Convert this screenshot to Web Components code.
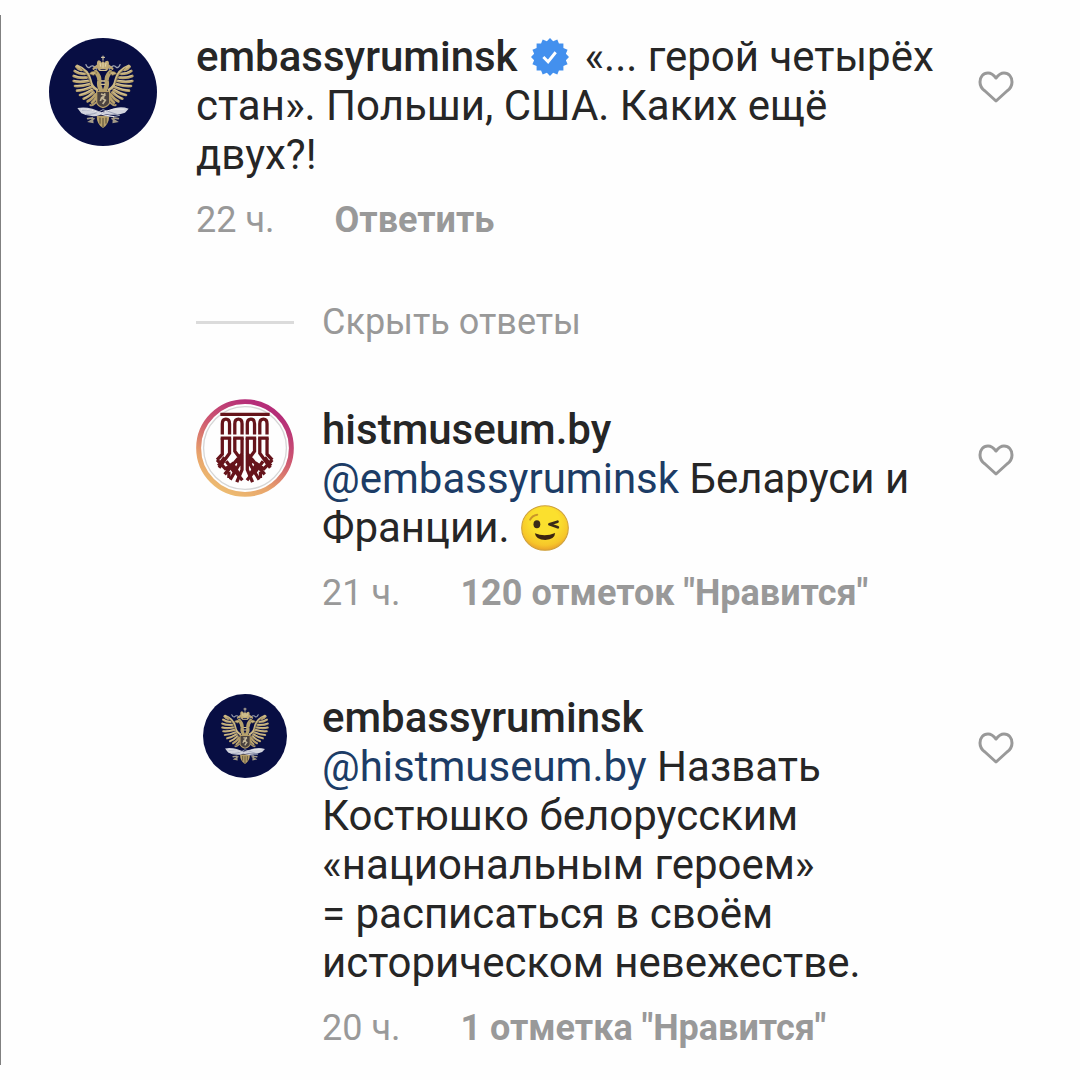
<!DOCTYPE html>
<html lang="ru">
<head>
<meta charset="utf-8">
<meta name="viewport" content="width=device-width, initial-scale=1">
<title>Комментарии</title>
<style>
  :root {
    --color-text: #262626;
    --color-muted: #999;
    --color-link: #1c3c66;
    --color-line: #dbdbdb;
  }
  body {
    margin: 0;
    background: #fefefe;
    color: var(--color-text);
    font-family: Roboto, "Noto Sans", sans-serif;
    font-size: 42px;
    line-height: 49px;
  }
  a { color: var(--color-link); text-decoration: none; }
</style>
</head>
<body>
<comment-thread>
  <comment-item user="embassyruminsk" time="22 ч." action="Ответить">
    <user-avatar slot="avatar" kind="eagle" size="large"></user-avatar>
    <verified-badge slot="badge"></verified-badge>
    «... герой четырёх стан». Польши, США. Каких ещё двух?!
  </comment-item>
  <comment-replies slot="replies" label="Скрыть ответы">
    <comment-item reply user="histmuseum.by" time="21 ч." action='120 отметок "Нравится"'>
      <user-avatar slot="avatar" kind="museum"></user-avatar>
      <a href="#embassyruminsk">@embassyruminsk</a> Беларуси и Франции. <wink-emoji></wink-emoji>
    </comment-item>
    <comment-item reply user="embassyruminsk" time="20 ч." action='1 отметка "Нравится"'>
      <user-avatar slot="avatar" kind="eagle"></user-avatar>
      <a href="#histmuseum.by">@histmuseum.by</a> Назвать Костюшко белорусским «национальным героем» =&nbsp;расписаться в своём историческом невежестве.
    </comment-item>
  </comment-replies>
</comment-thread>

<script>
// one half of the eagle, the other half is the same group mirrored
const eagleHalf = `
  <g fill="none" stroke-linecap="round">
    <g stroke="#b9a26c" stroke-width="8">
      <path d="M107 110Q112 118 122 120"/>
      <path d="M102 123Q114 132 132 132"/>
      <path d="M99 138Q113 145 138 143"/>
      <path d="M99 153Q115 158 143 153"/>
      <path d="M103 168Q120 170 147 163"/>
      <path d="M109 182Q126 182 151 172"/>
      <path d="M118 195Q133 193 155 180"/>
      <path d="M129 206Q142 202 159 187"/>
      <path d="M141 214Q152 209 164 193"/>
      <path d="M154 218Q162 213 168 199"/>
    </g>
    <g stroke="#e6d8b4" stroke-width="2">
      <path d="M104 122Q116 130 130 130M101 137Q115 143 136 141M101 152Q117 156 141 151M105 167Q122 168 145 161M111 181Q128 180 149 170M120 194Q135 191 153 178M131 205Q144 200 157 185"/>
    </g>
    <path d="M110 108Q142 120 149 150Q153 172 169 179" stroke="#cdb985" stroke-width="8"/>
    <path d="M120 114Q144 129 150 162" stroke="#6d5d3c" stroke-width="2"/>
    <path d="M181 180Q173 166 176 153Q177 138 165 126" stroke="#b6a26d" stroke-width="13"/>
    <path d="M168 128Q155 119 146 131L158 136Z" fill="#c7b17c" stroke="#806e46" stroke-width="2"/>
    <path d="M168 117Q155 101 147 112Q141 115 136 104" stroke="#9fa4b2" stroke-width="4"/>
    <path d="M159 116l10-8 7 10" stroke="#bda672" stroke-width="7"/>
    <path d="M165 218Q153 229 149 225" stroke="#ad986a" stroke-width="6"/>
    <path d="M141 266l14-2 1 13-10-2 14-9" stroke="#a39a88" stroke-width="5"/>
  </g>`;

const pictures = {
  eagle: `
    <svg viewBox="25 24 324 324" aria-hidden="true">
      <circle cx="187" cy="186" r="162" fill="#080e43"/>
      ${eagleHalf}
      <g transform="translate(374 0) scale(-1 1)">${eagleHalf}</g>
      <path d="M170 108Q166 93 175 91Q181 93 183 98Q187 89 191 98Q194 92 200 92Q208 94 203 108L199 117H175Z" fill="#c2ac78"/>
      <path d="M187 77v15M181 82h12M187 98v15M178 99l2 11M196 99l-2 11" stroke="#e2d4ad" stroke-width="3"/>
      <path d="M176 121h22M181 153h12M180 163h14" stroke="#d7c593" stroke-width="4"/>
      <path d="M168 184h39v34q-3 10-20 15-16-5-19-15z" fill="#4b4340" stroke="#b59d67" stroke-width="4"/>
      <path d="M181 192l11 4-9 8 11 7-8 11M193 190l-5 14M179 213l5-12" fill="none" stroke="#c5b898" stroke-width="5"/>
      <path d="M168 257Q168 283 187 294Q205 283 206 257Z" fill="#b8a16b"/>
      <path d="M178 263v18M187 264v27M196 263v18" stroke="#504835" stroke-width="3"/>
      <path d="M110 234Q131 230 155 236L187 248L224 234Q244 229 264 236L253 248Q236 256 208 254L187 252L168 258Q142 261 122 250Z" fill="#d1d3dd"/>
      <path d="M124 240Q151 236 184 252Q209 265 237 256L187 239Q157 256 136 253" fill="none" stroke="#9ba2b8" stroke-width="3"/>
      <path d="M121 237Q151 236 187 254L220 260M183 248L218 237 251 238" fill="none" stroke="#eceaed" stroke-width="3"/>
    </svg>`,
  museum: `
    <svg viewBox="30 27 298 298" aria-hidden="true">
      <defs>
        <linearGradient id="ring" x1="0.75" y1="0.1" x2="0.3" y2="1">
          <stop offset="0" stop-color="#b52d78"/>
          <stop offset="0.4" stop-color="#cf5a70"/>
          <stop offset="0.75" stop-color="#e8a36b"/>
          <stop offset="1" stop-color="#edbc71"/>
        </linearGradient>
      </defs>
      <circle cx="179" cy="176" r="141" fill="#fefefe" stroke="url(#ring)" stroke-width="15"/>
      <circle cx="179" cy="176" r="126" fill="#fefefe" stroke="#d6d6d6" stroke-width="4"/>
      <g fill="none" stroke="#66141b" stroke-width="10">
        <path d="M104 74H254"/>
        <path d="M110 135V102Q110 88 121 88T132 102V135M148 135V102Q148 88 159 88T170 102V135M186 135V102Q186 88 197 88T208 102V135M224 135V102Q224 88 235 88T246 102V135"/>
        <path d="M105 146H137M143 146H175M181 146H213M219 146H251"/>
        <path d="M110 146V195L94 212M132 146V192L100 236M148 146V186L160 202V228L134 272M170 146V194L117 256M186 146V194L239 256M208 146V186L196 202V228L222 272M224 146V192L256 236M246 146V195L262 212M170 194V242L154 280M186 194V242L202 280"/>
        <path d="M94 212L122 242M98 230L117 204M122 216L150 254M119 240L141 224L160 254M130 248V267M147 244L171 274M262 212L234 242M258 230L239 204M234 216L206 254M237 240L215 224L196 254M226 248V267M209 244L185 274"/>
      </g>
    </svg>`
};

class UserAvatar extends HTMLElement {
  constructor() {
    super();
    this.attachShadow({ mode: 'open' }).innerHTML = `
      <style>
        :host { display: block; width: 84px; margin: 7px; }
        :host([size="large"]) { width: 108px; margin: 0; }
        :host([kind="museum"]) { width: 98px; margin: 0; }
        svg { display: block; width: 100%; }
      </style>
      ${pictures[this.getAttribute('kind')]}
    `;
  }
}

class VerifiedBadge extends HTMLElement {
  constructor() {
    super();
    // sixteen-pointed seal
    const points = Array.from({ length: 32 }, (_, i) => {
      const r = i % 2 ? 17 : 20;
      const a = Math.PI * i / 16;
      return (20 + r * Math.sin(a)).toFixed(1) + ',' + (20 - r * Math.cos(a)).toFixed(1);
    }).join(' ');
    this.attachShadow({ mode: 'open' }).innerHTML = `
      <style>
        :host { display: inline-block; width: 38px; height: 38px; margin: 0 5px 0 3px; vertical-align: -5px; line-height: 0; }
        svg { width: 100%; height: 100%; }
      </style>
      <svg viewBox="0 0 40 40" role="img" aria-label="Подтверждено">
        <polygon points="${points}" fill="#4390ee"/>
        <path d="M13 20l5 5 8-10" fill="none" stroke="#fff" stroke-width="3"/>
      </svg>
    `;
  }
}

class WinkEmoji extends HTMLElement {
  constructor() {
    super();
    this.attachShadow({ mode: 'open' }).innerHTML = `
      <style>
        :host { display: inline-block; width: 48px; height: 46px; margin-left: 1px; vertical-align: -9px; line-height: 0; }
        svg { width: 100%; height: 100%; overflow: visible; }
      </style>
      <svg viewBox="64 44 142 138" preserveAspectRatio="none" role="img" aria-label="Подмигивает">
        <defs>
          <radialGradient id="face" cx="0.5" cy="0.35" r="0.67">
            <stop offset="0.45" stop-color="#fbe02e"/>
            <stop offset="0.8" stop-color="#f6c62a"/>
            <stop offset="1" stop-color="#e99a2b"/>
          </radialGradient>
        </defs>
        <ellipse cx="135" cy="113" rx="69" ry="67" fill="url(#face)" stroke="#cda03b" stroke-width="3"/>
        <path d="M91 88Q97 75 112 73" fill="none" stroke="#c9962a" stroke-width="6" stroke-linecap="round"/>
        <ellipse cx="111" cy="102" rx="10" ry="12" fill="#3b2b18"/>
        <path d="M172 94L148 102 173 111" fill="none" stroke="#3b2b18" stroke-width="8" stroke-linecap="round" stroke-linejoin="round"/>
        <path d="M105 129Q135 141 165 128Q164 147 136 149Q108 149 105 129Z" fill="#3b2410"/>
      </svg>
    `;
  }
}

class LikeButton extends HTMLElement {
  constructor() {
    super();
    this.attachShadow({ mode: 'open' }).innerHTML = `
      <style>
        :host { display: block; }
        button { display: block; padding: 0; border: 0; background: none; color: var(--color-muted); cursor: pointer; }
        svg { display: block; width: 36px; height: 32px; }
      </style>
      <button type="button" aria-label="Нравится">
        <svg viewBox="0 0 36 32" fill="none" stroke="currentColor" stroke-width="3" stroke-linejoin="round">
          <path d="M18 7C15 3 12 2 10 2C5 2 2 6 2 11C2 15 4 18 7 20L18 30L29 20C32 18 34 15 34 11C34 6 31 2 26 2C24 2 21 3 18 7Z"/>
        </svg>
      </button>
    `;
  }
}

class CommentItem extends HTMLElement {
  constructor() {
    super();
    const user = this.getAttribute('user');
    this.attachShadow({ mode: 'open' }).innerHTML = `
      <style>
        :host { display: flex; align-items: flex-start; gap: 39px; }
        :host([reply]) { gap: 28px; }
        ::slotted(user-avatar) { flex: none; }
        .content { flex: 1; min-width: 0; margin-top: -6px; }
        :host([reply]) .content { margin-top: 6px; }
        p { margin: 0; }
        .name { color: inherit; font-weight: 500; text-decoration: none; }
        :host([reply]) .name { display: block; width: fit-content; }
        .meta {
          display: flex;
          gap: 60px;
          margin-top: 21px;
          color: var(--color-muted);
          font-size: 36px;
          line-height: 41px;
        }
        .meta button {
          padding: 0;
          border: 0;
          background: none;
          color: inherit;
          font: inherit;
          font-weight: 700;
          cursor: pointer;
        }
        like-button { margin-top: 33px; }
        :host([reply]) like-button { margin-top: 45px; }
      </style>
      <slot name="avatar"></slot>
      <div class="content">
        <p><a class="name" href="#${user}">${user}</a> <slot name="badge"></slot> <slot></slot></p>
        <div class="meta">
          <time>${this.getAttribute('time')}</time>
          <button type="button">${this.getAttribute('action')}</button>
        </div>
      </div>
      <like-button></like-button>
    `;
  }
}

class CommentReplies extends HTMLElement {
  constructor() {
    super();
    this.attachShadow({ mode: 'open' }).innerHTML = `
      <style>
        :host { display: block; margin-left: 147px; }
        .toggle {
          display: flex;
          align-items: center;
          gap: 28px;
          margin: 61px 0 56px;
          padding: 0;
          border: 0;
          background: none;
          color: var(--color-muted);
          font: inherit;
          font-size: 36px;
          line-height: 41px;
          cursor: pointer;
        }
        .toggle::before { content: ""; width: 98px; height: 3px; background: var(--color-line); }
        .list { display: flex; flex-direction: column; gap: 73px; }
      </style>
      <button class="toggle" type="button">${this.getAttribute('label')}</button>
      <div class="list"><slot></slot></div>
    `;
  }
}

class CommentThread extends HTMLElement {
  constructor() {
    super();
    this.attachShadow({ mode: 'open' }).innerHTML = `
      <style>
        :host {
          display: flow-root;
          margin: 15px 0;
          padding: 23px 66px 16px 48px;
          border-left: 1px solid #808080;
        }
      </style>
      <slot></slot>
      <slot name="replies"></slot>
    `;
  }
}

customElements.define('user-avatar', UserAvatar);
customElements.define('verified-badge', VerifiedBadge);
customElements.define('wink-emoji', WinkEmoji);
customElements.define('like-button', LikeButton);
customElements.define('comment-item', CommentItem);
customElements.define('comment-replies', CommentReplies);
customElements.define('comment-thread', CommentThread);
</script>
</body>
</html>
